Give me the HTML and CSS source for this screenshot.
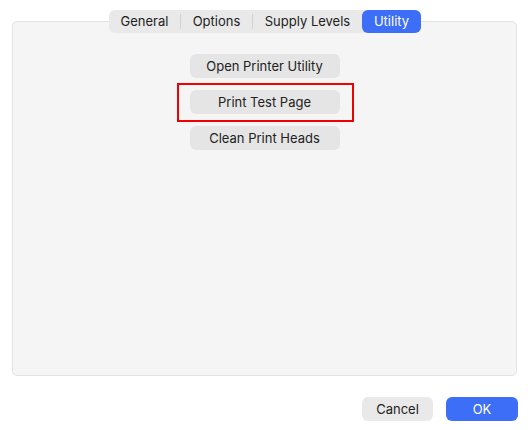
FILE: index.html
```html
<!DOCTYPE html>
<html>
<head>
<meta charset="utf-8">
<link rel="stylesheet" href="styles.css">
</head>
<body>
<div class="window">
  <div class="panel">
    <div class="tabs">
      <div class="tab t-general">General</div>
      <div class="sep"></div>
      <div class="tab t-options">Options</div>
      <div class="sep"></div>
      <div class="tab t-supply">Supply Levels</div>
      <div class="tab t-utility selected">Utility</div>
    </div>
    <div class="actions">
      <button class="btn">Open Printer Utility</button>
      <div class="highlight"><button class="btn">Print Test Page</button></div>
      <button class="btn">Clean Print Heads</button>
    </div>
  </div>
  <div class="footer">
    <button class="fbtn cancel">Cancel</button>
    <button class="fbtn ok">OK</button>
  </div>
</div>
</body>
</html>
```
FILE: styles.css
```css
html, body {
  margin: 0;
  padding: 0;
  background: #ffffff;
  font-family: Inter, "Noto Sans", "Liberation Sans", sans-serif;
  font-size: 13px;
  color: #222222;
}
.window {
  width: 528px;
  height: 430px;
  box-sizing: border-box;
  padding: 21px 11px 0 12px;
  display: flex;
  flex-direction: column;
}
.panel {
  position: relative;
  height: 355px;
  box-sizing: border-box;
  background: #f5f5f5;
  border: 1px solid #e3e3e3;
  border-radius: 5px;
  display: flex;
  flex-direction: column;
  align-items: center;
  padding-top: 32px;
}
.tabs {
  position: absolute;
  top: -12px;
  left: 96px;
  height: 23px;
  display: flex;
  align-items: center;
  background: #e9e9e9;
  border-radius: 6px;
}
.tab {
  height: 23px;
  line-height: 23px;
  text-align: center;
  border-radius: 6px;
  color: #222222;
  white-space: nowrap;
}
.t-general { width: 71px; }
.t-options { width: 71px; }
.t-supply { width: 109px; }
.t-utility { width: 59px; }
.tab.selected {
  background: #3d6ef7;
  color: #ffffff;
}
.sep {
  width: 1px;
  height: 15px;
  background: #d2d2d2;
}
.actions {
  display: flex;
  flex-direction: column;
  align-items: center;
  gap: 12px;
}
.btn {
  width: 150px;
  height: 24px;
  border: none;
  border-radius: 6px;
  background: #e5e5e5;
  font: inherit;
  color: #222222;
  padding: 0;
}
.highlight {
  position: relative;
}
.highlight::after {
  content: "";
  position: absolute;
  top: -7px;
  bottom: -8px;
  left: -13px;
  right: -14px;
  border: 2px solid #f00000;
}
.footer {
  display: flex;
  justify-content: flex-end;
  gap: 13px;
  margin-top: 21px;
  margin-right: -1px;
}
.fbtn {
  height: 24px;
  border: none;
  border-radius: 6px;
  font: inherit;
  padding: 0;
}
.cancel {
  width: 71px;
  background: #e9e9e9;
  color: #222222;
}
.ok {
  width: 72px;
  background: #3d6ef7;
  color: #ffffff;
}
```
